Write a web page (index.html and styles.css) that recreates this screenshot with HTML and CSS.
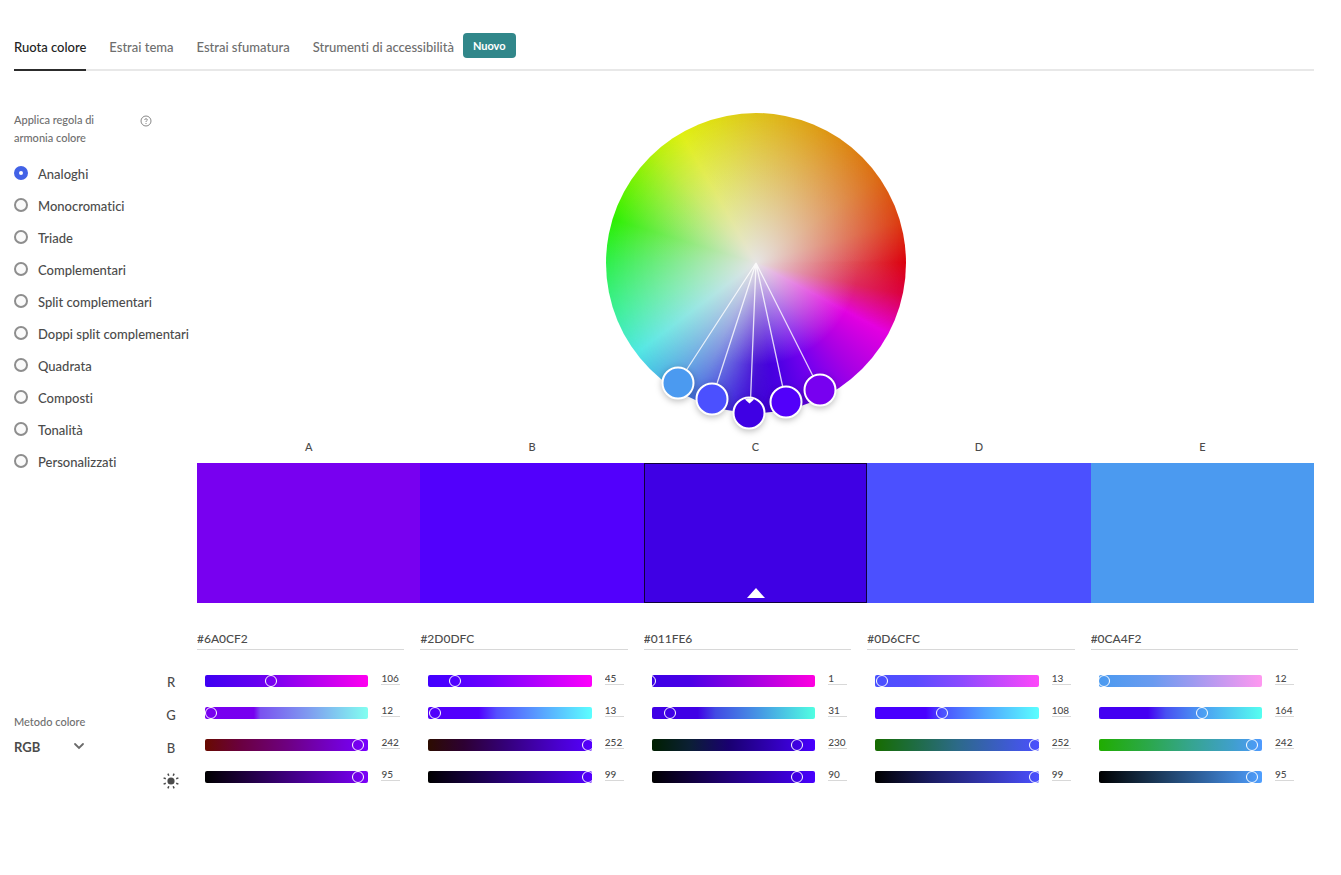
FILE: index.html
```html
<!DOCTYPE html>
<html lang="it">
<head>
<meta charset="utf-8">
<title>Ruota colore</title>
<link rel="stylesheet" href="styles.css">
</head>
<body>
<nav class="tabs">
  <a class="tab tab-active" href="#ruota">Ruota colore</a>
  <a class="tab" href="#tema">Estrai tema</a>
  <a class="tab" href="#sfumatura">Estrai sfumatura</a>
  <a class="tab" href="#accessibilita">Strumenti di accessibilità <span class="badge">Nuovo</span></a>
</nav>
<main class="layout">
  <form class="rules">
    <div class="rules-head">
      <span class="caption">Applica regola di armonia colore</span>
      <button class="help" type="button" aria-label="Aiuto">
        <svg width="12" height="12" viewBox="0 0 12 12" fill="none" stroke="#7a7a7a" stroke-width=".9"><circle cx="6" cy="6" r="5"/><path d="M4.700 4.900C4.700 3.300 7.300 3.300 7.300 4.900C7.300 5.800 6 5.800 6 7M6 8v1"/></svg>
      </button>
    </div>
    <label class="rule"><input type="radio" name="rule" checked>Analoghi</label>
    <label class="rule"><input type="radio" name="rule">Monocromatici</label>
    <label class="rule"><input type="radio" name="rule">Triade</label>
    <label class="rule"><input type="radio" name="rule">Complementari</label>
    <label class="rule"><input type="radio" name="rule">Split complementari</label>
    <label class="rule"><input type="radio" name="rule">Doppi split complementari</label>
    <label class="rule"><input type="radio" name="rule">Quadrata</label>
    <label class="rule"><input type="radio" name="rule">Composti</label>
    <label class="rule"><input type="radio" name="rule">Tonalità</label>
    <label class="rule"><input type="radio" name="rule">Personalizzati</label>
  </form>

  <section class="stage">
    <div class="wheel">
      <svg class="handles" viewBox="0 0 300 300">
        <g stroke="#fff" stroke-opacity=".8" stroke-width="1.3">
          <path d="M150 150L72 270M150 150L106 286M150 150L144 300M150 150L180 289M150 150L214 277"/>
        </g>
        <g stroke="#fff" stroke-width="2">
          <circle class="handle" cx="72" cy="270" r="15.5" fill="#4b9af0"/>
          <circle class="handle" cx="106" cy="286" r="15.5" fill="#4b50ff"/>
          <circle class="handle" cx="180" cy="289" r="15.5" fill="#5200fa"/>
          <circle class="handle" cx="214" cy="277" r="15.5" fill="#7800f0"/>
          <circle class="handle" cx="143" cy="300" r="15.5" fill="#3f00e4"/>
        </g>
        <path d="M139 286.500Q143.500 284 148 286.500L143.500 290.500Z" fill="#fff"/>
      </svg>
    </div>
    <div class="palette">
      <div class="swatch"><span class="letter">A</span><button class="chip chip-a" type="button" aria-label="Colore A"></button></div>
      <div class="swatch"><span class="letter">B</span><button class="chip chip-b" type="button" aria-label="Colore B"></button></div>
      <div class="swatch"><span class="letter">C</span><button class="chip chip-c chip-base" type="button" aria-label="Colore C"><svg width="18" height="10" viewBox="0 0 18 10"><path d="M0 10L9 0L18 10Z" fill="#fff"/></svg></button></div>
      <div class="swatch"><span class="letter">D</span><button class="chip chip-d" type="button" aria-label="Colore D"></button></div>
      <div class="swatch"><span class="letter">E</span><button class="chip chip-e" type="button" aria-label="Colore E"></button></div>
    </div>
  </section>

  <aside class="mode">
    <div class="mode-pick">
      <label class="caption" for="mode">Metodo colore</label>
      <div class="select-wrap">
        <select id="mode"><option>RGB</option><option>CMYK</option><option>LAB</option></select>
        <svg class="chevron" width="12" height="8" viewBox="0 0 12 8" fill="none" stroke="#6a6a6a" stroke-width="1.8" stroke-linecap="round"><path d="M2 2L6 6L10 2"/></svg>
      </div>
    </div>
    <div class="channels">
      <span>R</span><span>G</span><span>B</span>
      <span><svg width="18" height="18" viewBox="-9 -9 18 18" stroke="#4b4b4b" stroke-width="1.500"><circle r="3.600" fill="#4b4b4b" stroke="none"/><path d="M5.200 2.200L7.400 3.100M2.200 5.200L3.100 7.400M-2.200 5.200L-3.100 7.400M-5.200 2.200L-7.400 3.100M-5.200 -2.200L-7.400 -3.100M-2.200 -5.200L-3.100 -7.400M2.200 -5.200L3.100 -7.400M5.200 -2.200L7.400 -3.100"/></svg></span>
    </div>
  </aside>

  <section class="editors">
    <div class="editor">
      <input class="hex" type="text" value="#6A0CF2" aria-label="Esadecimale A">
      <div class="row"><div class="track" style="background:linear-gradient(90deg,#3d00f2,#6600f0 32%,#7c00f0 43%,#ff00f0)"><input type="range" max="255" value="106" aria-label="A rosso"></div><input class="num" type="text" value="106" aria-label="A valore rosso"></div>
      <div class="row"><div class="track" style="background:linear-gradient(90deg,#7800f0,#7700f0 30%,#7a52f0 34%,#7f9af0 63%,#82fff0)"><input type="range" max="255" value="12" aria-label="A verde"></div><input class="num" type="text" value="12" aria-label="A valore verde"></div>
      <div class="row"><div class="track" style="background:linear-gradient(90deg,#680a00,#6a0040 22%,#6e0080 50%,#7500dc 85%,#7800ff)"><input type="range" max="255" value="242" aria-label="A blu"></div><input class="num" type="text" value="242" aria-label="A valore blu"></div>
      <div class="row"><div class="track" style="background:linear-gradient(90deg,#000,#24004a 30%,#4c009a 62%,#7c00fa)"><input type="range" value="95" aria-label="A luminosità"></div><input class="num" type="text" value="95" aria-label="A valore luminosità"></div>
    </div>
    <div class="editor">
      <input class="hex" type="text" value="#2D0DFC" aria-label="Esadecimale B">
      <div class="row"><div class="track" style="background:linear-gradient(90deg,#4200ff,#5000ff 17%,#7000ff 38%,#ff00fc)"><input type="range" max="255" value="45" aria-label="B rosso"></div><input class="num" type="text" value="45" aria-label="B valore rosso"></div>
      <div class="row"><div class="track" style="background:linear-gradient(90deg,#5200fa,#5200ff 31%,#5550ff 42%,#58a0ff 68%,#5cffff)"><input type="range" max="255" value="13" aria-label="B verde"></div><input class="num" type="text" value="13" aria-label="B valore verde"></div>
      <div class="row"><div class="track" style="background:linear-gradient(90deg,#2c0c00,#2d0033 22%,#340078 47%,#4a00d0 80%,#5500ff)"><input type="range" max="255" value="252" aria-label="B blu"></div><input class="num" type="text" value="252" aria-label="B valore blu"></div>
      <div class="row"><div class="track" style="background:linear-gradient(90deg,#000,#1b0050 33%,#3800a8 67%,#5500ff)"><input type="range" value="99" aria-label="B luminosità"></div><input class="num" type="text" value="99" aria-label="B valore luminosità"></div>
    </div>
    <div class="editor">
      <input class="hex" type="text" value="#011FE6" aria-label="Esadecimale C">
      <div class="row"><div class="track" style="background:linear-gradient(90deg,#3c00e6,#4a00e6 23%,#8b00e2 52%,#ff00e0)"><input type="range" max="255" value="1" aria-label="C rosso"></div><input class="num" type="text" value="1" aria-label="C valore rosso"></div>
      <div class="row"><div class="track" style="background:linear-gradient(90deg,#4000e6,#4000e6 28%,#424be4 39%,#469be4 67%,#50ffe2)"><input type="range" max="255" value="31" aria-label="C verde"></div><input class="num" type="text" value="31" aria-label="C valore verde"></div>
      <div class="row"><div class="track" style="background:linear-gradient(90deg,#001f00,#0b1f34 23%,#190070 47%,#3000b4 73%,#4800ff)"><input type="range" max="255" value="230" aria-label="C blu"></div><input class="num" type="text" value="230" aria-label="C valore blu"></div>
      <div class="row"><div class="track" style="background:linear-gradient(90deg,#000,#170055 33%,#3000ac 67%,#4800ff)"><input type="range" value="90" aria-label="C luminosità"></div><input class="num" type="text" value="90" aria-label="C valore luminosità"></div>
    </div>
    <div class="editor">
      <input class="hex" type="text" value="#0D6CFC" aria-label="Esadecimale D">
      <div class="row"><div class="track" style="background:linear-gradient(90deg,#4850ff,#5a4cff 25%,#8a4aff 52%,#ff48fa)"><input type="range" max="255" value="13" aria-label="D rosso"></div><input class="num" type="text" value="13" aria-label="D valore rosso"></div>
      <div class="row"><div class="track" style="background:linear-gradient(90deg,#4800ff,#4800ff 31%,#4b50ff 41%,#50a4ff 67%,#5affff)"><input type="range" max="255" value="108" aria-label="D verde"></div><input class="num" type="text" value="108" aria-label="D valore verde"></div>
      <div class="row"><div class="track" style="background:linear-gradient(90deg,#176c00,#1d6c3c 22%,#2c6a88 50%,#3c5cca 78%,#4b50ff)"><input type="range" max="255" value="252" aria-label="D blu"></div><input class="num" type="text" value="252" aria-label="D valore blu"></div>
      <div class="row"><div class="track" style="background:linear-gradient(90deg,#000,#191b60 33%,#3235ae 67%,#4b50ff)"><input type="range" value="99" aria-label="D luminosità"></div><input class="num" type="text" value="99" aria-label="D valore luminosità"></div>
    </div>
    <div class="editor">
      <input class="hex" type="text" value="#0CA4F2" aria-label="Esadecimale E">
      <div class="row"><div class="track" style="background:linear-gradient(90deg,#4a9af0,#6a9bf0 33%,#9c9af0 57%,#ff98f0)"><input type="range" max="255" value="12" aria-label="E rosso"></div><input class="num" type="text" value="12" aria-label="E valore rosso"></div>
      <div class="row"><div class="track" style="background:linear-gradient(90deg,#4400f2,#4400f2 30%,#4850f2 41%,#4b9cf2 63%,#55fff0)"><input type="range" max="255" value="164" aria-label="E verde"></div><input class="num" type="text" value="164" aria-label="E valore verde"></div>
      <div class="row"><div class="track" style="background:linear-gradient(90deg,#20ad00,#2ba84a 30%,#35a58c 55%,#409fcc 82%,#4f9aff)"><input type="range" max="255" value="242" aria-label="E blu"></div><input class="num" type="text" value="242" aria-label="E valore blu"></div>
      <div class="row"><div class="track" style="background:linear-gradient(90deg,#000,#183452 33%,#3268a8 67%,#4f9fff)"><input type="range" value="95" aria-label="E luminosità"></div><input class="num" type="text" value="95" aria-label="E valore luminosità"></div>
    </div>
  </section>
</main>
</body>
</html>
```

FILE: styles.css
```css
* { box-sizing: border-box; }
body {
  margin: 0;
  padding: 24px 27px 24px 14px;
  background: #fff;
  color: #4b4b4b;
  font: 500 13px/18px Lato, "Noto Sans", sans-serif;
  font-variant-ligatures: none;
}
button, input, select { font: inherit; color: inherit; }
button { border: 0; padding: 0; background: none; }
input { margin: 0; }

.tabs {
  display: flex;
  gap: 23px;
  height: 47px;
  border-bottom: 2px solid #e8e8e8;
}
.tab {
  display: flex;
  align-items: center;
  gap: 9px;
  height: 47px;
  padding-bottom: 2px;
  color: #6e6e6e;
  text-decoration: none;
  white-space: nowrap;
}
.tab-active { color: #222; border-bottom: 2px solid #2c2c2c; padding-bottom: 0; }
.badge {
  padding: 4px 10px 3px;
  margin-bottom: 2px;
  border-radius: 4px;
  background: #31878a;
  color: #fff;
  font-size: 11px;
  font-weight: 700;
}

.layout {
  display: grid;
  grid-template-columns: 183px 1fr;
}
.rules { padding-top: 40px; white-space: nowrap; }
.rules-head {
  display: flex;
  justify-content: space-between;
  align-items: flex-start;
  width: 138px;
  margin-bottom: 11px;
  white-space: normal;
}
.caption { color: #6e6e6e; font-size: 11px; line-height: 18px; }
.rules-head .caption { width: 90px; }
.help { display: block; height: 12px; margin-top: 4px; line-height: 0; }
.rule { display: flex; align-items: center; gap: 10px; height: 32px; }
.rule input {
  appearance: none;
  width: 14px;
  height: 14px;
  margin-bottom: 2px;
  border: 2px solid #8e8e8e;
  border-radius: 50%;
  background: #fafafa;
}
.rule input:checked { border: 5px solid #4262e6; background: #fff; }

.stage { padding-top: 42px; }
.wheel {
  position: relative;
  width: 300px;
  height: 300px;
  margin: 0 auto 25px;
  border-radius: 50%;
  background: conic-gradient(#dfc319 0deg, #de9c14 25deg, #dc6a12 55deg, #dc3c10 74deg, #dc000e 90deg, #dc0040 102deg, #e400e0 118deg, #a800e4 138deg, #7800ee 152deg, #4c00e4 168deg, #3c00d4 180deg, #3f20dc 188deg, #4358e0 200deg, #48a0e4 215deg, #4fe8e4 233deg, #3cf09c 250deg, #2ef04c 270deg, #2cf000 287deg, #78f204 304deg, #b8f00c 318deg, #e0f010 330deg, #dfdc14 345deg, #dfc319 360deg);
}
.wheel::before, .wheel::after {
  content: "";
  position: absolute;
  inset: 0;
  border-radius: 50%;
}
.wheel::before {
  background: radial-gradient(circle closest-side, rgba(230, 228, 226, .32) 68%, rgba(230, 228, 226, 0));
  mask-image: conic-gradient(#000 88deg, transparent 120deg, transparent 172deg, #000 204deg);
}
.wheel::after {
  background: radial-gradient(circle closest-side, #e6e4e4, rgba(230, 228, 228, 0) 68%);
}
.handles {
  position: absolute;
  inset: 0;
  z-index: 1;
  overflow: visible;
}
.handle { filter: drop-shadow(0 2px 3px rgba(0, 0, 0, .25)); }

.palette { display: flex; }
.swatch { flex: 1; text-align: center; }
.letter { display: block; height: 25px; font-size: 11px; line-height: 18px; }
.chip {
  display: flex;
  align-items: flex-end;
  justify-content: center;
  width: 100%;
  height: 140px;
}
.chip-a { background: #7800f0; }
.chip-b { background: #5200fc; }
.chip-c { background: #3f00e4; }
.chip-d { background: #4b50ff; }
.chip-e { background: #4b9af0; }
.chip-base { border: 1px solid #10003c; padding-bottom: 4px; }

.mode { display: flex; justify-content: space-between; padding-right: 17px; }
.mode-pick { padding-top: 110px; }
.mode-pick .caption { display: block; margin-bottom: 5px; }
.select-wrap { position: relative; width: 72px; }
.select-wrap select {
  appearance: none;
  width: 100%;
  height: 22px;
  padding: 0;
  border: 0;
  background: none;
  font-weight: 700;
}
.chevron { position: absolute; right: 1px; top: 6px; pointer-events: none; }
.channels { display: grid; grid-auto-rows: 33px; padding-top: 62px; }
.channels span { display: flex; align-items: center; justify-content: center; width: 18px; }

.editors { display: flex; padding-top: 26px; }
.editor { flex: 1; min-width: 0; }
.hex {
  display: block;
  width: calc(100% - 16px);
  height: 21px;
  margin-bottom: 15px;
  padding: 0 0 2px;
  border: 0;
  border-bottom: 1px solid #d8d8d8;
  background: none;
  font-size: 12px;
}
.row { display: flex; align-items: center; gap: 13px; height: 32px; padding: 0 20px 0 8px; }
.track { flex: 1; min-width: 0; height: 12px; border-radius: 2px; overflow: hidden; }
.track input {
  appearance: none;
  display: block;
  width: calc(100% + 12px);
  height: 12px;
  margin-left: -8px;
  background: none;
}
.track input::-webkit-slider-thumb {
  appearance: none;
  width: 12px;
  height: 12px;
  border: 1px solid #fff;
  border-radius: 50%;
  background: none;
}
.num {
  width: 19px;
  height: 14px;
  margin-bottom: 6px;
  padding: 0;
  border: 0;
  border-bottom: 1px solid #d8d8d8;
  background: none;
  font-size: 10px;
}
```
